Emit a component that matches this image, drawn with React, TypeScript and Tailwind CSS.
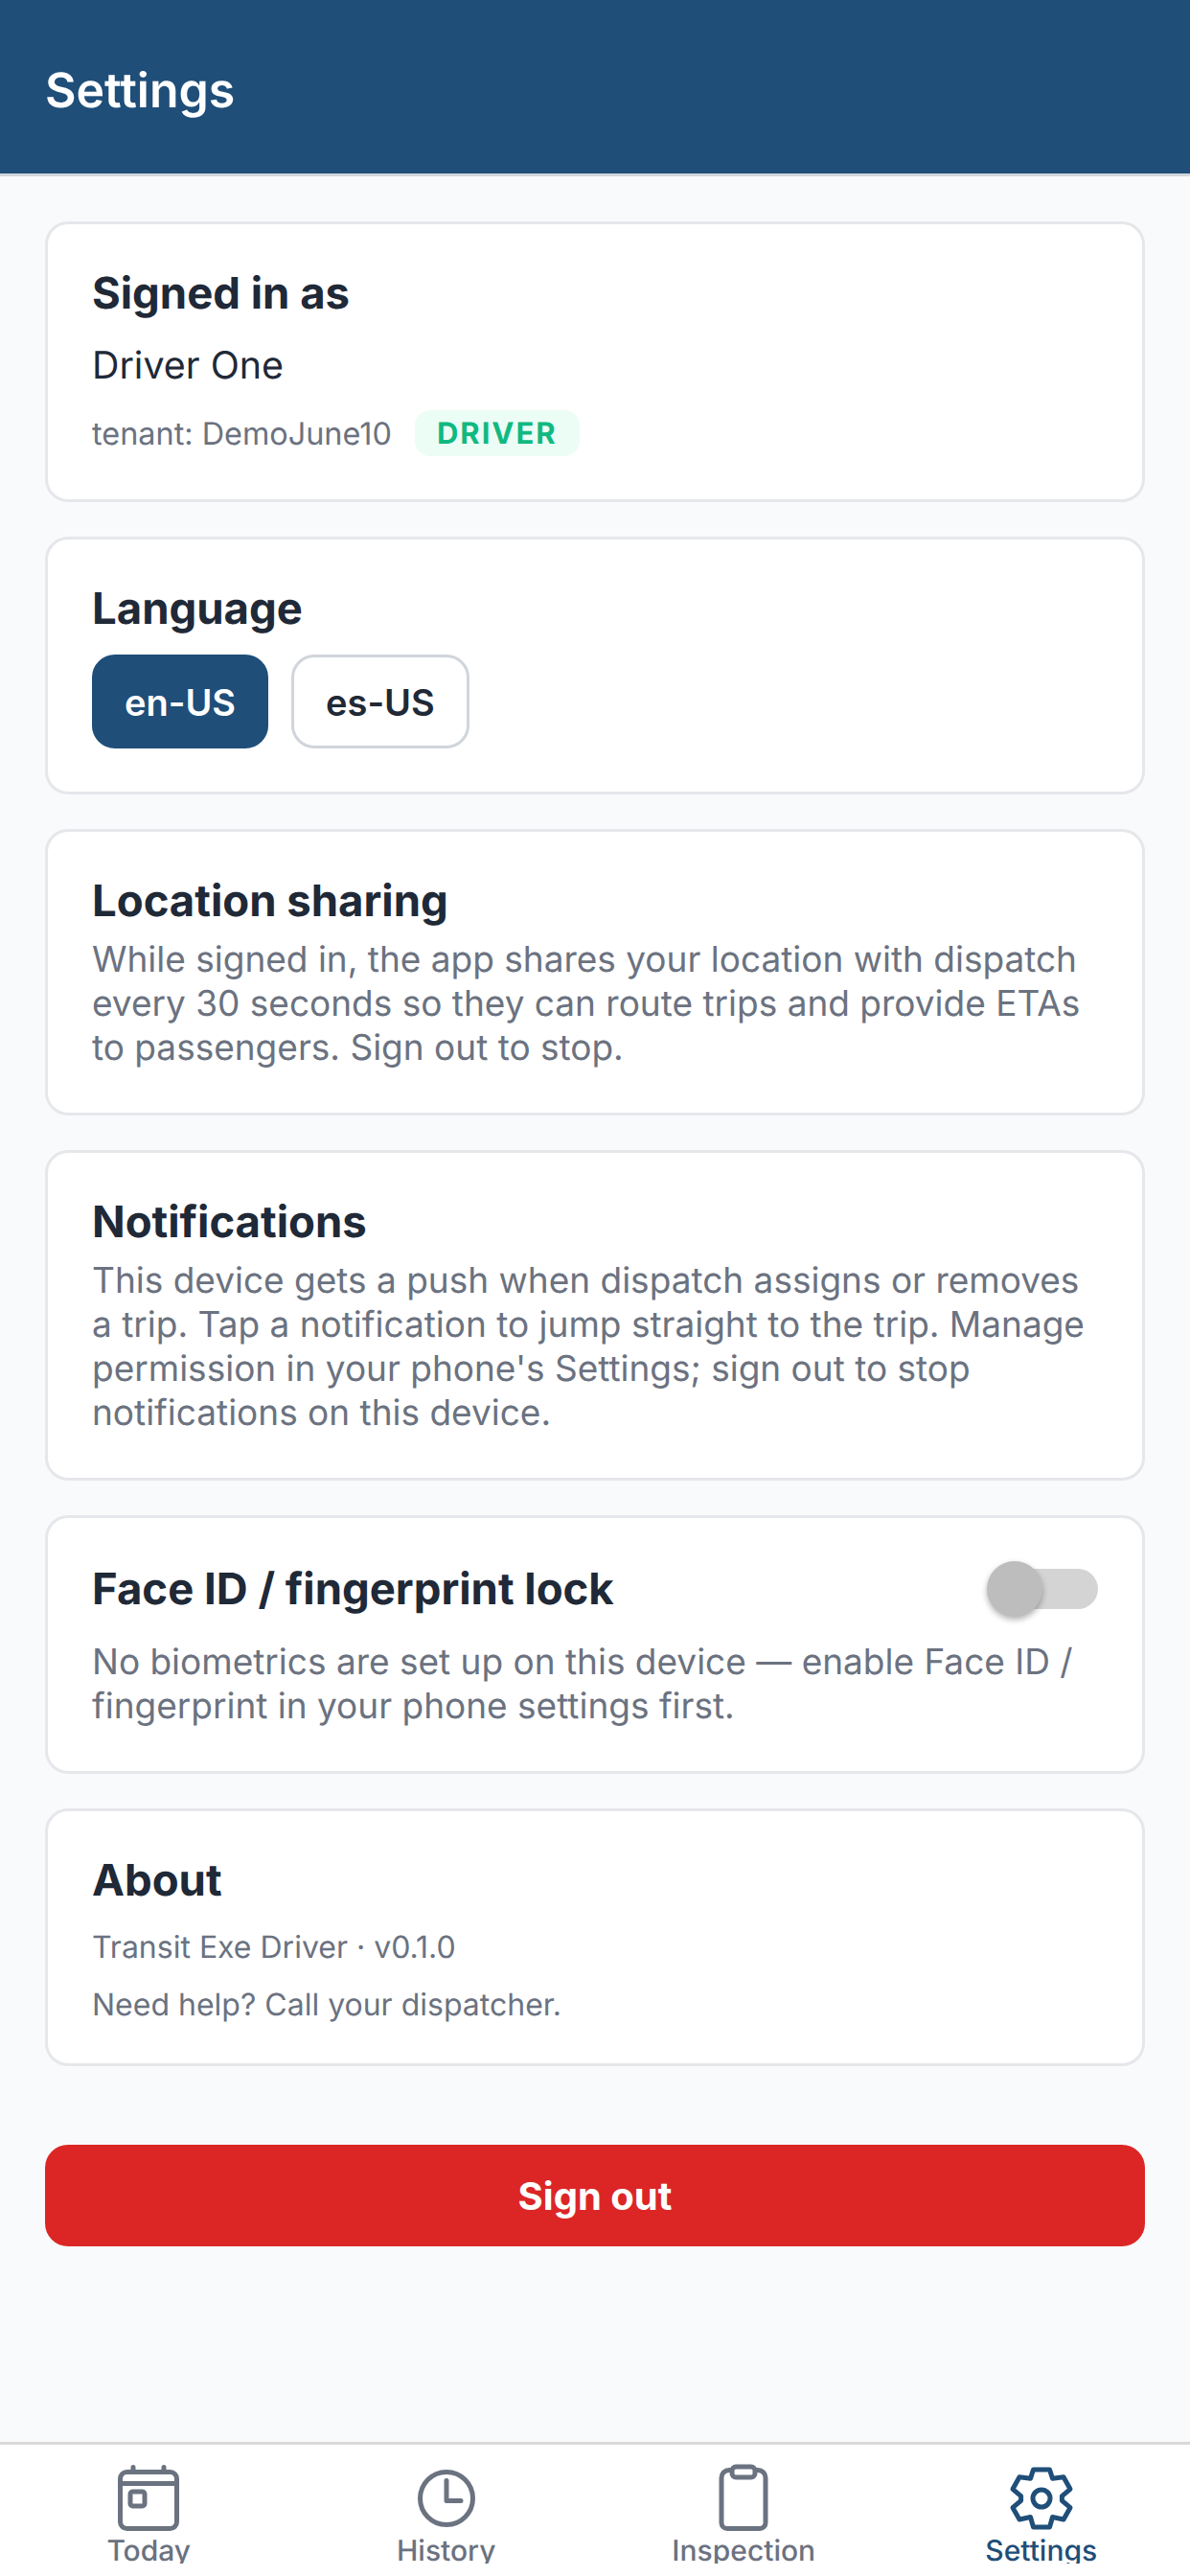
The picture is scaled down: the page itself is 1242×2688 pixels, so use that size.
import { FC, ReactNode } from 'react';

const Card: FC<{ children: ReactNode }> = ({ children }) => (
    <div className="bg-white border-[3px] border-[#e5e7eb] rounded-[24px] px-[46px] pt-[48px] pb-[45px]">{children}</div>
);

const Heading: FC<{ children: ReactNode }> = ({ children }) => (
    <h2 className="text-[#1f2937] text-[45.5px] leading-[48px] font-bold">{children}</h2>
);

const Body: FC<{ children: ReactNode }> = ({ children }) => (
    <p className="text-[#6b7280] text-[37px] leading-[46px]">{children}</p>
);

const CalendarIcon = () => (
    <svg width="72" height="72" viewBox="0 0 72 72" fill="none" stroke="currentColor" strokeWidth="5" strokeLinecap="round" strokeLinejoin="round">
        <rect x="6.5" y="8.5" width="59" height="59" rx="7" />
        <path d="M6.5 20.5h59" />
        <path d="M20 3.5v5M52 3.5v5" />
        <rect x="17" y="29" width="15" height="15" rx="2.5" />
    </svg>
);

const ClockIcon = () => (
    <svg width="72" height="72" viewBox="0 0 72 72" fill="none" stroke="currentColor" strokeWidth="5" strokeLinecap="round" strokeLinejoin="round">
        <circle cx="36" cy="36" r="27.5" />
        <path d="M36 17.5v21h15" />
    </svg>
);

const ClipboardIcon = () => (
    <svg width="72" height="72" viewBox="0 0 72 72" fill="none" stroke="currentColor" strokeWidth="5" strokeLinecap="round" strokeLinejoin="round">
        <path d="M22 6.5h-1a8 8 0 0 0-8 8v47a6 6 0 0 0 6 6h34a6 6 0 0 0 6-6v-47a8 8 0 0 0-8-8h-1" />
        <rect x="24" y="3" width="24" height="11" rx="4" />
    </svg>
);

const GearIcon = () => (
    <svg width="72" height="72" viewBox="-36 -36 72 72" fill="none" stroke="currentColor" strokeWidth="5" strokeLinecap="round" strokeLinejoin="round">
        <path d="M-8.5 -30H8.5L11.5 -20.7L23 -22.3L30 -9.7L21.4 -2.3V2.3L30 9.7L23 22L11.5 19.5L8.5 30H-8.5L-11.5 19.5L-23 22L-30 9.7L-21.4 2.3V-2.3L-30 -9.7L-23 -22.3L-11.5 -20.7Z" />
        <circle r="9" />
    </svg>
);

const tabs = [
    { label: 'Today', icon: <CalendarIcon />, active: false },
    { label: 'History', icon: <ClockIcon />, active: false },
    { label: 'Inspection', icon: <ClipboardIcon />, active: false },
    { label: 'Settings', icon: <GearIcon />, active: true },
];

export default function App() {
    return (
        <div className="w-[1242px] h-[2688px] flex flex-col bg-[#f9fafb] font-['Inter',sans-serif] [text-rendering:geometricPrecision] overflow-hidden">
            <header className="h-[184px] shrink-0 bg-[#1f4e79] border-b-[3px] border-[#d1d5db] flex items-center px-[47px] pt-[10px]">
                <h1 className="text-white text-[50px] font-semibold">Settings</h1>
            </header>

            <main className="flex-1 px-[47px] pt-[47px] flex flex-col gap-[36px]">
                <Card>
                    <Heading>Signed in as</Heading>
                    <p className="text-[#1f2937] text-[39.4px] leading-[48px] mt-[27px]">Driver One</p>
                    <div className="flex items-center gap-[24px] mt-[23px]">
                        <span className="text-[#6b7280] text-[32.4px] leading-[44px] pt-[2px]">tenant: DemoJune10</span>
                        <span className="bg-[#ecfdf5] text-[#10b981] text-[31px] leading-[46px] pt-[2px] font-bold tracking-[2px] rounded-[16px] px-[23px]">DRIVER</span>
                    </div>
                </Card>

                <Card>
                    <Heading>Language</Heading>
                    <div className="flex gap-[24px] mt-[24px]">
                        <button type="button" className="h-[98px] px-[31px] pt-[2px] rounded-[24px] bg-[#1f4e79] border-[3px] border-[#1f4e79] text-white text-[38px] font-semibold">en-US</button>
                        <button type="button" className="h-[98px] px-[33px] pt-[2px] rounded-[24px] bg-white border-[3px] border-[#d1d5db] text-[#1f2937] text-[38px] font-semibold">es-US</button>
                    </div>
                </Card>

                <Card>
                    <Heading>Location sharing</Heading>
                    <div className="mt-[14px]">
                        <Body>While signed in, the app shares your location with dispatch every 30 seconds so they can route trips and provide ETAs to passengers. Sign out to stop.</Body>
                    </div>
                </Card>

                <Card>
                    <Heading>Notifications</Heading>
                    <div className="mt-[14px]">
                        <Body>This device gets a push when dispatch assigns or removes a trip. Tap a notification to jump straight to the trip. Manage permission in your phone's Settings; sign out to stop notifications on this device.</Body>
                    </div>
                </Card>

                <Card>
                    <div className="flex items-center justify-between h-[52px]">
                        <Heading>Face ID / fingerprint lock</Heading>
                        <div className="relative w-[110px] h-[42px] rounded-full bg-[#d4d4d4]">
                            <div className="absolute left-[-6px] top-[-8px] w-[58px] h-[58px] rounded-full bg-[#bdbdbd] shadow-[0_3px_6px_rgba(0,0,0,0.3)]" />
                        </div>
                    </div>
                    <div className="mt-[27px]">
                        <Body>No biometrics are set up on this device — enable Face ID / fingerprint in your phone settings first.</Body>
                    </div>
                </Card>

                <Card>
                    <Heading>About</Heading>
                    <p className="text-[#6b7280] text-[32px] leading-[32px] mt-[30px]">Transit Exe Driver · v0.1.0</p>
                    <p className="text-[#6b7280] text-[32px] leading-[32px] mt-[28px]">Need help? Call your dispatcher.</p>
                </Card>

                <button type="button" className="mt-[46px] h-[106px] pt-[2px] rounded-[24px] bg-[#dc2626] text-white text-[40px] font-bold">Sign out</button>
            </main>

            <nav className="h-[140px] shrink-0 bg-white border-t-[3px] border-[#d9d9d9] grid grid-cols-4">
                {tabs.map((tab) => (
                    <div key={tab.label} className={`flex flex-col items-center pt-[20px] ${tab.active ? 'text-[#1f4e79]' : 'text-[#6b7280]'}`}>
                        {tab.icon}
                        <span className="text-[30px] leading-[36px] mt-[1px] h-[31px] overflow-hidden font-medium">{tab.label}</span>
                    </div>
                ))}
            </nav>
        </div>
    );
}
